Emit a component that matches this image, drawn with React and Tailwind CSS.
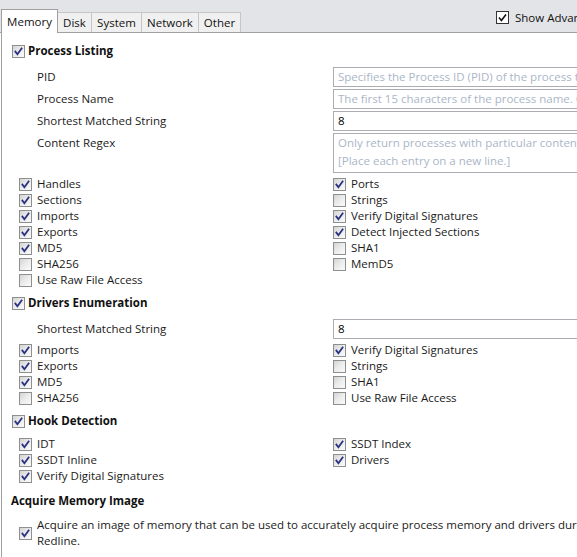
import React from 'react';

const FONT = { fontFamily: '"Open Sans", "Noto Sans", sans-serif' };

function Check({ checked = false }) {
  return (
    <span className="relative inline-block w-[13px] h-[13px] shrink-0 border border-[#8e8f8f] bg-linear-to-br from-[#d4d4d4] via-[#ececec] to-[#fafafa]">
      {checked && (
        <svg viewBox="0 0 11 11" className="absolute inset-0 w-[11px] h-[11px]">
          <path d="M2.4 5.6 L4.4 8.2 L8.6 2.4" fill="none" stroke="#2b3282" strokeWidth="1.8" strokeLinecap="square" />
        </svg>
      )}
    </span>
  );
}

function Header({ label, checked, box = true }) {
  return (
    <div className="flex items-center gap-[3px] h-[16px] pl-[10px]">
      {box && <Check checked={checked} />}
      <span className="font-bold text-[11.5px] text-[#111]">{label}</span>
    </div>
  );
}

function Item({ label, checked }) {
  return (
    <div className="flex items-center gap-[5px] h-[16px]">
      <Check checked={checked} />
      <span className="text-[11.5px] text-[#1a1a1a] whitespace-nowrap">{label}</span>
    </div>
  );
}

function CheckGrid({ left, right, className = '' }) {
  const rows = Math.max(left.length, right.length);
  const cells = [];
  for (let i = 0; i < rows; i++) {
    cells.push(left[i] ? <Item key={'l' + i} {...left[i]} /> : <div key={'l' + i} />);
    cells.push(right[i] ? <Item key={'r' + i} {...right[i]} /> : <div key={'r' + i} />);
  }
  return <div className={`grid grid-cols-[314px_1fr] pl-[17px] ${className}`}>{cells}</div>;
}

function Field({ label, placeholder, value, height = 'h-[20px]', className = '' }) {
  return (
    <div className={`grid grid-cols-[296px_300px] pl-[35px] ${className}`}>
      <div className="text-[11.5px] text-[#1a1a1a] leading-[20px]">{label}</div>
      <div className={`${height} border border-[#abadb3] bg-white px-[4px] text-[11.5px] leading-[18px] whitespace-pre overflow-hidden`}>
        {value ? <span className="text-black">{value}</span> : <span className="text-[#aab6c8]">{placeholder}</span>}
      </div>
    </div>
  );
}

export default function App() {
  return (
    <div style={FONT} className="w-[577px] h-[557px] overflow-hidden bg-white">
      <div className="w-[900px]">
        {/* tab strip */}
        <div className="flex items-end h-[33px] bg-[#e2e4e7] border-b border-[#a0a0a0]">
          <div className="flex items-end pl-[1px]">
            <div className="w-[57px] h-[24px] -mb-px pt-[1px] bg-white border border-b-0 border-[#a0a0a0] text-[11.5px] text-[#111] flex items-center justify-center">Memory</div>
            {['Disk', 'System', 'Network', 'Other'].map((t, i) => (
              <div
                key={t}
                className={`h-[20px] bg-[#f0f0f0] border border-b-0 border-l-0 border-[#c6c6c6] text-[11.5px] text-[#111] flex items-center justify-center ${
                  ['w-[34px]', 'w-[50px]', 'w-[57px]', 'w-[42px]'][i]
                }`}
              >
                {t}
              </div>
            ))}
          </div>
          <div className="flex items-center gap-[6px] ml-[255px] mb-[6px]">
            <span className="relative inline-block w-[13px] h-[13px] border border-[#333] bg-white">
              <svg viewBox="0 0 11 11" className="absolute inset-0 w-[11px] h-[11px]">
                <path d="M2 5.6 L4.4 8.4 L9 2.4" fill="none" stroke="#111" strokeWidth="1.6" />
              </svg>
            </span>
            <span className="text-[11.5px] text-[#111] whitespace-nowrap">Show Advanced Parameters</span>
          </div>
        </div>

        {/* content */}
        <div className="ml-[1px] border-l border-[#a0a0a0] h-[524px] pt-[10px]">
          <Header label="Process Listing" checked />
          <div className="mt-[8px] flex flex-col gap-[2px]">
            <Field label="PID" placeholder="Specifies the Process ID (PID) of the process to collect. Leave blank to collect all." />
            <Field label="Process Name" placeholder="The first 15 characters of the process name. Only return processes matching this name." />
            <Field label="Shortest Matched String" value="8" />
            <Field
              label="Content Regex"
              height="h-[40px]"
              placeholder={'Only return processes with particular content.\n[Place each entry on a new line.]'}
            />
          </div>
          <CheckGrid
            className="mt-[3px]"
            left={[
              { label: 'Handles', checked: true },
              { label: 'Sections', checked: true },
              { label: 'Imports', checked: true },
              { label: 'Exports', checked: true },
              { label: 'MD5', checked: true },
              { label: 'SHA256' },
              { label: 'Use Raw File Access' },
            ]}
            right={[
              { label: 'Ports', checked: true },
              { label: 'Strings' },
              { label: 'Verify Digital Signatures', checked: true },
              { label: 'Detect Injected Sections', checked: true },
              { label: 'SHA1' },
              { label: 'MemD5' },
            ]}
          />

          <div className="mt-[7px]">
            <Header label="Drivers Enumeration" checked />
          </div>
          <Field className="mt-[8px]" label="Shortest Matched String" value="8" />
          <CheckGrid
            className="mt-[3px]"
            left={[
              { label: 'Imports', checked: true },
              { label: 'Exports', checked: true },
              { label: 'MD5', checked: true },
              { label: 'SHA256' },
            ]}
            right={[
              { label: 'Verify Digital Signatures', checked: true },
              { label: 'Strings' },
              { label: 'SHA1' },
              { label: 'Use Raw File Access' },
            ]}
          />

          <div className="mt-[7px]">
            <Header label="Hook Detection" checked />
          </div>
          <CheckGrid
            className="mt-[7px]"
            left={[
              { label: 'IDT', checked: true },
              { label: 'SSDT Inline', checked: true },
              { label: 'Verify Digital Signatures', checked: true },
            ]}
            right={[
              { label: 'SSDT Index', checked: true },
              { label: 'Drivers', checked: true },
            ]}
          />

          <div className="mt-[9px] h-[16px] flex items-center pl-[9px]">
            <span className="font-bold text-[11.5px] text-[#111]">Acquire Memory Image</span>
          </div>
          <div className="mt-[8px] pl-[17px] flex items-center gap-[5px]">
            <Check checked />
            <div className="text-[11.5px] leading-[16px] text-[#1a1a1a] whitespace-nowrap">
              <div>Acquire an image of memory that can be used to accurately acquire process memory and drivers during analysis in</div>
              <div>Redline.</div>
            </div>
          </div>
        </div>
      </div>
    </div>
  );
}
